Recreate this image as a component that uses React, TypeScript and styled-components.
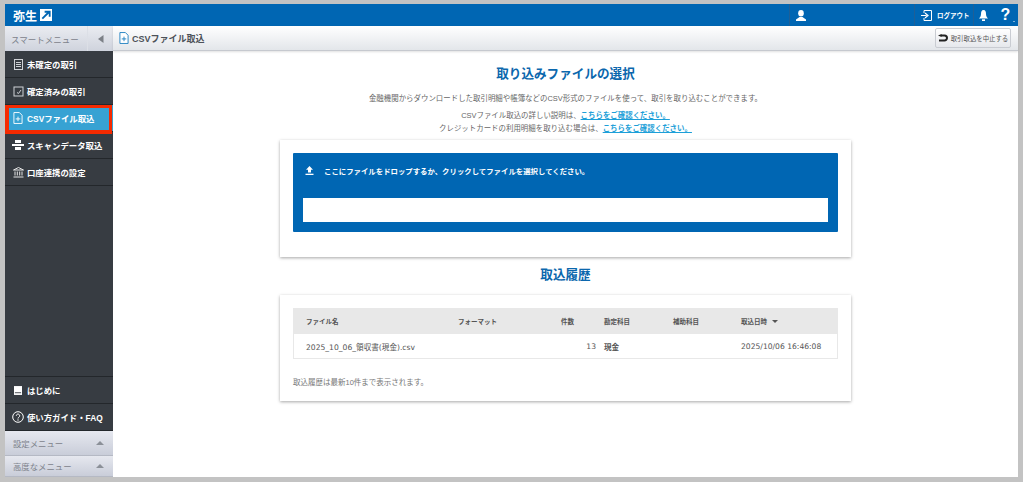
import styled, { createGlobalStyle } from "styled-components";

const GlobalStyle = createGlobalStyle`
  html, body {
    margin: 0;
    padding: 0;
    height: 100%;
    background: #c3c3c3;
  }
  #root {
    height: 100%;
  }
  * {
    box-sizing: border-box;
  }
`;

const FONT = `"Liberation Sans", "Noto Sans CJK JP", sans-serif`;
const WIDE_FONT = `"DejaVu Sans", "Noto Sans CJK JP", sans-serif`;

const Frame = styled.div`
  width: 1023px;
  height: 482px;
  padding: 4px 5px 5px;
  font-family: ${FONT};
  overflow: hidden;
`;

const Window = styled.div`
  height: 100%;
  display: flex;
  flex-direction: column;
  background: #fff;
`;

const Header = styled.header`
  height: 22px;
  flex: none;
  display: flex;
  align-items: center;
  background: #0066b3;
  color: #fff;
`;

const Logo = styled.div`
  display: flex;
  align-items: center;
  gap: 3px;
  padding-left: 8px;
  font-size: 12px;
  font-weight: 700;
`;

const HeaderUser = styled.div`
  margin-left: auto;
  width: 125px;
  height: 100%;
  display: flex;
  align-items: center;
  padding-left: 6px;
  border-left: 1px solid #1f5f96;
`;

const HeaderLogout = styled.div`
  width: 59px;
  height: 100%;
  display: flex;
  align-items: center;
  gap: 5px;
  padding-left: 6px;
  border-left: 1px solid #1f5f96;
  font-size: 6.5px;
  font-weight: 700;
  white-space: nowrap;
`;

const HeaderBell = styled.div`
  width: 20px;
  height: 100%;
  display: flex;
  align-items: center;
  justify-content: center;
  border-left: 1px solid #1f5f96;
`;

const HeaderHelp = styled.div`
  width: 25px;
  height: 100%;
  display: flex;
  align-items: center;
  justify-content: center;
  font-size: 16px;
  font-weight: 700;
  position: relative;
  &::after {
    content: "";
    position: absolute;
    right: 3px;
    bottom: 3px;
    border: 1.5px solid transparent;
    border-top-color: #fff;
  }
`;

const Body = styled.div`
  flex: 1;
  min-height: 0;
  display: flex;
`;

const Sidebar = styled.nav`
  width: 108px;
  flex: none;
  display: flex;
  flex-direction: column;
  background: #373c42;
`;

const SmartMenu = styled.div`
  height: 25px;
  flex: none;
  display: flex;
  align-items: center;
  background: linear-gradient(#eaecf1, #cfd3dd);
  color: #7d828b;
  font-size: 8.5px;
`;

const SmartLabel = styled.span`
  flex: 1;
  padding-left: 6px;
`;

const Collapse = styled.span`
  width: 26px;
  height: 100%;
  display: flex;
  align-items: center;
  justify-content: center;
  border-left: 1px solid #dcdfe6;
`;

const MenuItem = styled.div<{ $active?: boolean }>`
  height: 27px;
  flex: none;
  display: flex;
  align-items: center;
  gap: 3px;
  padding-left: 7px;
  color: #fff;
  font-size: 8.4px;
  font-weight: 700;
  white-space: nowrap;
  position: relative;
  border-bottom: 1px solid #23272b;
  background: ${(p) => (p.$active ? "#37a2d3" : "transparent")};
  ${(p) =>
    p.$active &&
    `&::after {
      content: "";
      position: absolute;
      top: 0;
      left: 0;
      right: 1px;
      bottom: -3px;
      border-style: solid;
      border-color: #f52a00;
      border-width: 3px 3px 4px 4px;
      z-index: 2;
    }`}
`;

const IconSlot = styled.span`
  width: 12px;
  height: 12px;
  flex: none;
  display: flex;
  align-items: center;
  justify-content: center;
`;

const Spacer = styled.div`
  flex: 1;
  border-bottom: 1px solid #23272b;
`;

const Accordion = styled.div<{ $height: number }>`
  height: ${(p) => p.$height}px;
  flex: none;
  display: flex;
  align-items: center;
  justify-content: space-between;
  padding: 0 9px 0 8px;
  background: linear-gradient(#e6e8ef, #c9cdd9);
  border-bottom: 1px solid #b5b9c4;
  color: #7d828b;
  font-size: 8.4px;
`;

const UpArrow = styled.span`
  width: 0;
  height: 0;
  border-left: 4px solid transparent;
  border-right: 4px solid transparent;
  border-bottom: 4px solid #8b9098;
`;

const Main = styled.main`
  flex: 1;
  min-width: 0;
  display: flex;
  flex-direction: column;
`;

const SubHeader = styled.div`
  height: 25px;
  flex: none;
  display: flex;
  align-items: center;
  justify-content: space-between;
  padding: 0 7px 0 6px;
  background: linear-gradient(#ffffff, #e3e6ea);
  border-bottom: 1px solid #c6c9cf;
  box-shadow: 0 1px 2px rgba(0, 0, 0, 0.12);
`;

const PageTitle = styled.div`
  display: flex;
  align-items: center;
  gap: 3px;
  color: #4d5259;
  font-size: 9px;
  font-weight: 700;
`;

const CancelButton = styled.button`
  height: 20px;
  width: 76px;
  padding: 0;
  display: flex;
  align-items: center;
  justify-content: center;
  gap: 3px;
  background: linear-gradient(#ffffff, #e6e8ec);
  border: 1px solid #c9ccd2;
  border-radius: 2px;
  color: #555;
  font-family: ${FONT};
  font-size: 6.4px;
  white-space: nowrap;
`;

const Content = styled.div`
  flex: 1;
  min-height: 0;
  display: flex;
  flex-direction: column;
  align-items: center;
`;

const SectionTitle = styled.h2<{ $top: number }>`
  margin: ${(p) => p.$top}px 0 0;
  height: 18px;
  line-height: 18px;
  color: #0b67ad;
  font-size: 12.6px;
  font-weight: 700;
`;

const Lead = styled.p`
  margin: 0;
  color: #666;
  font-size: 7.45px;
  line-height: 13px;
  white-space: nowrap;
`;

const LeadFirst = styled(Lead)`
  margin: 9px 0 3px;
  line-height: 14px;
`;

const Link = styled.a`
  color: #1d9fd8;
  font-weight: 700;
  text-decoration: underline;
`;

const Card = styled.section<{ $height: number }>`
  width: 571px;
  height: ${(p) => p.$height}px;
  flex: none;
  padding: 13px 13px 0;
  background: #fff;
  box-shadow: 0 1px 3px rgba(0, 0, 0, 0.35);
`;

const UploadCard = styled(Card)`
  margin-top: 5px;
`;

const HistoryCard = styled(Card)`
  margin-top: 11px;
`;

const DropZone = styled.div`
  height: 79px;
  display: flex;
  flex-direction: column;
  padding: 0 10px;
  background: #0066b3;
  border-radius: 1px;
`;

const DropLabel = styled.div`
  height: 45px;
  display: flex;
  align-items: center;
  gap: 10px;
  padding: 0 2px 11px;
  color: #fff;
  font-size: 7.4px;
  font-weight: 700;
`;

const DropInput = styled.div`
  height: 24px;
  background: #fff;
`;

const Table = styled.div`
  border: 1px solid #e8e8e8;
  border-top: 0;
`;

const Row = styled.div<{ $head?: boolean }>`
  display: grid;
  grid-template-columns: 152px 103px 35px 77px 68px 1fr;
  align-items: center;
  height: ${(p) => (p.$head ? "26px" : "24px")};
  padding-left: 12px;
  background: ${(p) => (p.$head ? "#e8e8e8" : "#fff")};
  color: #555;
  font-size: ${(p) => (p.$head ? "6.5px" : "7.6px")};
  font-weight: 700;
  white-space: nowrap;
`;

const WideText = styled.span`
  font-family: ${WIDE_FONT};
  font-weight: 400;
  font-size: 7.6px;
`;

const Num = styled(WideText)`
  text-align: right;
`;

const Account = styled.span`
  padding-left: 8px;
`;

const Sort = styled.span`
  display: flex;
  align-items: center;
  gap: 5px;
  &::after {
    content: "";
    border-left: 3px solid transparent;
    border-right: 3px solid transparent;
    border-top: 3px solid #555;
  }
`;

const Note = styled.p`
  margin: 17px 0 0;
  color: #777;
  font-size: 7.5px;
`;

const LogoMark = () => (
  <svg width="12" height="12" viewBox="0 0 13 13">
    <rect width="13" height="13" fill="#fff" />
    <path d="M2.5 10.5 L10 3 M5 3h5.5v5.5" stroke="#0066b3" strokeWidth="2" fill="none" />
  </svg>
);

const DocIcon = ({ color = "#cfd2d6" }: { color?: string }) => (
  <svg width="11" height="11" viewBox="0 0 11 11">
    <rect x="1.5" y="0.5" width="8" height="10" fill="none" stroke={color} />
    <path d="M3 3.5h5M3 5.5h5M3 7.5h5" stroke={color} />
  </svg>
);

const CheckDocIcon = () => (
  <svg width="11" height="11" viewBox="0 0 11 11">
    <rect x="1" y="1" width="9" height="9" fill="none" stroke="#cfd2d6" />
    <path d="M4 6.5l1.5 1L8 4" fill="none" stroke="#cfd2d6" />
  </svg>
);

const FilePlusIcon = ({ color = "#fff", fill = "#fff" }: { color?: string; fill?: string }) => (
  <svg width="10" height="12" viewBox="0 0 11 13">
    <path d="M1 .5h6l3 3V12.500H1z" fill={fill} stroke={color} />
    <path d="M5.500 5v5M3 7.500h5" stroke={color} />
  </svg>
);

const ScannerIcon = () => (
  <svg width="12" height="10" viewBox="0 0 12 10">
    <rect x="3" y="0" width="6" height="3" fill="#fff" />
    <rect x="0" y="4" width="12" height="2" fill="#fff" />
    <rect x="3" y="7" width="6" height="3" fill="#fff" />
  </svg>
);

const BankIcon = () => (
  <svg width="11" height="11" viewBox="0 0 11 11">
    <path d="M5.500 0.500L10.500 3H.5z" fill="none" stroke="#e6e6e6" />
    <path d="M2 4.500v4M4.300 4.500v4M6.700 4.500v4M9 4.500v4M.5 10h10" stroke="#e6e6e6" />
  </svg>
);

const BookIcon = () => (
  <svg width="8" height="9" viewBox="0 0 9 10">
    <path d="M0 0h9v10H0z" fill="#fff" />
    <path d="M1 7.500h7" stroke="#373c42" />
  </svg>
);

const HelpIcon = () => (
  <svg width="12" height="12" viewBox="0 0 12 12">
    <circle cx="6" cy="6" r="5.300" fill="none" stroke="#fff" />
    <path d="M4.300 4.700a1.700 1.700 0 1 1 2.600 1.500c-.6.4-.9.700-.9 1.300" fill="none" stroke="#fff" />
    <circle cx="6" cy="9" r=".7" fill="#fff" />
  </svg>
);

const CollapseArrow = () => (
  <svg width="6" height="8" viewBox="0 0 6 8">
    <path d="M5.500 0v8L0 4z" fill="#7c8087" />
  </svg>
);

const UserIcon = () => (
  <svg width="10" height="11" viewBox="0 0 10 11">
    <ellipse cx="5" cy="3.200" rx="2.800" ry="3.200" fill="#fff" />
    <path d="M0 11V9.500L3.500 7h3L10 9.500V11z" fill="#fff" />
  </svg>
);

const LogoutIcon = () => (
  <svg width="11" height="11" viewBox="0 0 11 11">
    <path d="M3 3V.5h7.500v10H3V8" fill="none" stroke="#fff" />
    <path d="M0 5.500h5.500M4 3l3 2.500L4 8" fill="none" stroke="#fff" strokeWidth="1.200" />
  </svg>
);

const BellIcon = () => (
  <svg width="9" height="11" viewBox="0 0 9 11">
    <path d="M4.500 0C6.500 0 7 2 7 4c0 2 .7 3 2 4.500H0C1.300 7 2 6 2 4 2 2 2.500 0 4.500 0z" fill="#fff" />
    <rect x="3" y="9.300" width="3" height="1.700" fill="#fff" />
  </svg>
);

const ReturnIcon = () => (
  <svg width="10" height="8" viewBox="0 0 10 8">
    <path d="M1 6.500H6.500a2.500 2.500 0 0 0 0-5H3" fill="none" stroke="#222" strokeWidth="2" />
    <path d="M3.500 0v3L0 1.500z" fill="#222" />
  </svg>
);

const UploadIcon = () => (
  <svg width="9" height="9" viewBox="0 0 9 9">
    <path d="M4.500 0L8 3.700H6v2.800H3V3.700H1z" fill="#fff" />
    <rect x="0.500" y="7.700" width="8" height="1.300" fill="#fff" />
  </svg>
);

export default function App() {
  return (
    <>
      <GlobalStyle />
      <Frame>
        <Window>
          <Header>
            <Logo>
              弥生
              <LogoMark />
            </Logo>
            <HeaderUser>
              <UserIcon />
            </HeaderUser>
            <HeaderLogout>
              <LogoutIcon />
              ログアウト
            </HeaderLogout>
            <HeaderBell>
              <BellIcon />
            </HeaderBell>
            <HeaderHelp>?</HeaderHelp>
          </Header>
          <Body>
            <Sidebar>
              <SmartMenu>
                <SmartLabel>スマートメニュー</SmartLabel>
                <Collapse>
                  <CollapseArrow />
                </Collapse>
              </SmartMenu>
              <MenuItem>
                <IconSlot>
                  <DocIcon />
                </IconSlot>
                未確定の取引
              </MenuItem>
              <MenuItem>
                <IconSlot>
                  <CheckDocIcon />
                </IconSlot>
                確定済みの取引
              </MenuItem>
              <MenuItem $active>
                <IconSlot>
                  <FilePlusIcon fill="none" />
                </IconSlot>
                CSVファイル取込
              </MenuItem>
              <MenuItem>
                <IconSlot>
                  <ScannerIcon />
                </IconSlot>
                スキャンデータ取込
              </MenuItem>
              <MenuItem>
                <IconSlot>
                  <BankIcon />
                </IconSlot>
                口座連携の設定
              </MenuItem>
              <Spacer />
              <MenuItem>
                <IconSlot>
                  <BookIcon />
                </IconSlot>
                はじめに
              </MenuItem>
              <MenuItem>
                <IconSlot>
                  <HelpIcon />
                </IconSlot>
                使い方ガイド・FAQ
              </MenuItem>
              <Accordion $height={25}>
                設定メニュー
                <UpArrow />
              </Accordion>
              <Accordion $height={21}>
                高度なメニュー
                <UpArrow />
              </Accordion>
            </Sidebar>
            <Main>
              <SubHeader>
                <PageTitle>
                  <FilePlusIcon color="#1d7fc0" />
                  CSVファイル取込
                </PageTitle>
                <CancelButton>
                  <ReturnIcon />
                  取引取込を中止する
                </CancelButton>
              </SubHeader>
              <Content>
                <SectionTitle $top={14}>取り込みファイルの選択</SectionTitle>
                <LeadFirst>
                  金融機関からダウンロードした取引明細や帳簿などのCSV形式のファイルを使って、取引を取り込むことができます。
                </LeadFirst>
                <Lead>
                  CSVファイル取込の詳しい説明は、<Link>こちらをご確認ください。</Link>
                </Lead>
                <Lead>
                  クレジットカードの利用明細を取り込む場合は、<Link>こちらをご確認ください。</Link>
                </Lead>
                <UploadCard $height={117}>
                  <DropZone>
                    <DropLabel>
                      <UploadIcon />
                      ここにファイルをドロップするか、クリックしてファイルを選択してください。
                    </DropLabel>
                    <DropInput />
                  </DropZone>
                </UploadCard>
                <SectionTitle $top={9}>取込履歴</SectionTitle>
                <HistoryCard $height={106}>
                  <Table>
                    <Row $head>
                      <span>ファイル名</span>
                      <span>フォーマット</span>
                      <span>件数</span>
                      <Account>勘定科目</Account>
                      <span>補助科目</span>
                      <Sort>取込日時</Sort>
                    </Row>
                    <Row>
                      <WideText>2025_10_06_領収書(現金).csv</WideText>
                      <span />
                      <Num>13</Num>
                      <Account>現金</Account>
                      <span />
                      <WideText>2025/10/06 16:46:08</WideText>
                    </Row>
                  </Table>
                  <Note>取込履歴は最新10件まで表示されます。</Note>
                </HistoryCard>
              </Content>
            </Main>
          </Body>
        </Window>
      </Frame>
    </>
  );
}
